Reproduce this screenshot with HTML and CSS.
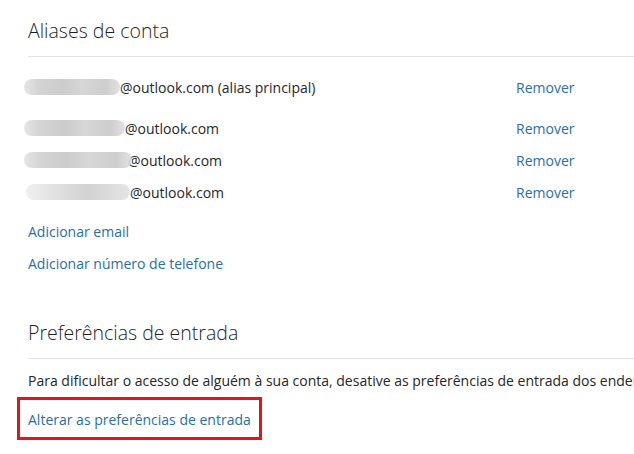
FILE: index.html
```html
<!DOCTYPE html>
<html lang="pt">
<head>
<meta charset="utf-8">
<title>Aliases de conta</title>
<link rel="stylesheet" href="styles.css">
</head>
<body>
<main class="page">
  <section class="section">
    <h2 class="section-title">Aliases de conta</h2>
    <div class="rule"></div>
    <div class="alias-list">
      <div class="alias-row alias-primary">
        <span class="alias-name"><span class="blur blur-a"></span><span>@outlook.com (alias principal)</span></span>
        <a class="link" href="#">Remover</a>
      </div>
      <div class="alias-row">
        <span class="alias-name"><span class="blur blur-b"></span><span>@outlook.com</span></span>
        <a class="link" href="#">Remover</a>
      </div>
      <div class="alias-row">
        <span class="alias-name"><span class="blur blur-c"></span><span>@outlook.com</span></span>
        <a class="link" href="#">Remover</a>
      </div>
      <div class="alias-row">
        <span class="alias-name"><span class="blur blur-d"></span><span>@outlook.com</span></span>
        <a class="link" href="#">Remover</a>
      </div>
    </div>
    <div class="actions">
      <a class="link action" href="#">Adicionar email</a>
      <a class="link action" href="#">Adicionar número de telefone</a>
    </div>
  </section>
  <section class="section section-2">
    <h2 class="section-title">Preferências de entrada</h2>
    <div class="rule"></div>
    <p class="desc">Para dificultar o acesso de alguém à sua conta, desative as preferências de entrada dos endereços</p>
    <div class="highlight"><a class="link" href="#">Alterar as preferências de entrada</a></div>
  </section>
</main>
</body>
</html>
```
FILE: styles.css
```css
html, body {
  margin: 0;
  padding: 0;
  background: #ffffff;
  overflow: hidden;
}
body {
  font-family: "Open Sans", "Noto Sans", "Liberation Sans", sans-serif;
  color: #262626;
  font-size: 14px;
}
.page {
  padding-left: 28px;
  width: 606px;
}
.section {
  display: flex;
  flex-direction: column;
}
.section-title {
  margin: 17px 0 0 0;
  font-size: 19.5px;
  font-weight: 300;
  line-height: 28px;
  height: 28px;
  color: #1f1f1f;
  white-space: nowrap;
}
.rule {
  margin-top: 11px;
  height: 1px;
  background: #e3e3e3;
  width: 700px;
}
.alias-list {
  display: flex;
  flex-direction: column;
  margin-top: 14px;
}
.alias-row {
  display: grid;
  grid-template-columns: 488px auto;
  align-items: center;
  height: 32px;
  white-space: nowrap;
}
.alias-primary {
  margin-bottom: 9px;
}
.alias-name {
  display: flex;
  align-items: center;
  margin-left: -4px;
}
.blur {
  display: inline-block;
  height: 16px;
  border-radius: 8px;
  background: linear-gradient(90deg, #e4e4e4 0%, #cfcfcf 15%, #c6c6c6 40%, #d2d2d2 60%, #c8c8c8 85%, #dedede 100%);
  opacity: 0.9;
}
.blur-a { width: 96px; }
.blur-b { width: 101px; }
.blur-c { width: 108px; margin-right: -4px; }
.blur-d { width: 104px; margin-left: 2px; background: linear-gradient(90deg, #eeeeee 0%, #dcdcdc 30%, #cdcdcd 60%, #e2e2e2 100%); }
.link {
  color: #2a6ea6;
  text-decoration: none;
  white-space: nowrap;
}
.actions {
  display: flex;
  flex-direction: column;
  margin-top: 8px;
}
.action {
  height: 32px;
  line-height: 32px;
}
.section-2 .section-title {
  margin-top: 39px;
}
.desc {
  margin: 6px 0 0 0;
  height: 32px;
  line-height: 32px;
  white-space: nowrap;
}
.highlight {
  align-self: flex-start;
  margin-left: -11px;
  border: 3px solid #e1161d;
  padding: 0 8px;
  height: 37px;
  line-height: 40px;
}
```
